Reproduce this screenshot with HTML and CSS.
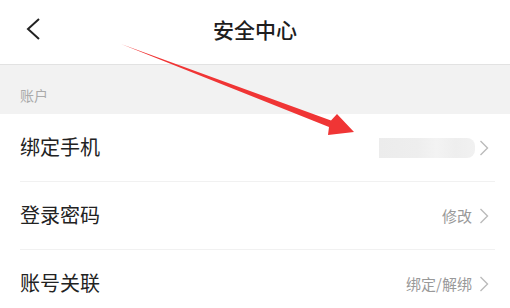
FILE: index.html
```html
<!DOCTYPE html>
<html lang="zh-CN">
<head>
    <meta charset="UTF-8">
    <meta name="viewport" content="width=device-width, initial-scale=1.0">
    <title>安全中心</title>
    <link rel="stylesheet" href="styles.css">
</head>
<body>
    <div id="header">
        <svg class="back" width="16" height="24" viewBox="0 0 16 24">
            <path d="M14 2 L3 12 L14 22" fill="none" stroke="#222" stroke-width="2"/>
        </svg>
        <span id="title">安全中心</span>
    </div>

    <div class="section-title">账户</div>

    <div class="list">
        <div class="row">
            <span class="label">绑定手机</span>
            <span class="value">
                <span class="masked"></span>
                <svg class="chevron" width="10" height="16" viewBox="0 0 10 16"><path d="M1.5 1 L8.5 8 L1.5 15" fill="none" stroke="#bbb" stroke-width="1.4"/></svg>
            </span>
        </div>
        <div class="row">
            <span class="label">登录密码</span>
            <span class="value">修改
                <svg class="chevron" width="10" height="16" viewBox="0 0 10 16"><path d="M1.5 1 L8.5 8 L1.5 15" fill="none" stroke="#bbb" stroke-width="1.4"/></svg>
            </span>
        </div>
        <div class="row">
            <span class="label">账号关联</span>
            <span class="value">绑定/解绑
                <svg class="chevron" width="10" height="16" viewBox="0 0 10 16"><path d="M1.5 1 L8.5 8 L1.5 15" fill="none" stroke="#bbb" stroke-width="1.4"/></svg>
            </span>
        </div>
    </div>

    <!-- red annotation arrow over the page -->
    <svg class="arrow" width="510" height="308" viewBox="0 0 510 308">
        <polygon points="121,44 331,120.5 337,114 354,132 328,135 329,127" fill="#f03535"/>
    </svg>
</body>
</html>
```

FILE: styles.css
```css
html, body {
    margin: 0;
    padding: 0;
}

body {
    font-family: "Noto Sans CJK SC", "Noto Sans", sans-serif;
    background-color: #fff;
    width: 510px;
    height: 308px;
    overflow: hidden;
    position: relative;
}

#header {
    height: 64px;
    border-bottom: 1px solid #e2e2e2;
    display: flex;
    align-items: center;
    justify-content: center;
    position: relative;
    background-color: #fff;
}

.back {
    position: absolute;
    left: 25px;
    top: 17px;
}

#title {
    font-size: 21px;
    font-weight: 500;
    color: #1e1e1e;
    margin-top: -6px;
}

.section-title {
    background-color: #f2f2f2;
    height: 49px;
    box-sizing: border-box;
    padding: 20px 0 0 20px;
    font-size: 14px;
    line-height: 20px;
    color: #aaa;
}

.list {
    padding-left: 20px;
}

.row {
    height: 67px;
    display: flex;
    align-items: center;
    justify-content: space-between;
    border-bottom: 1px solid #f1f1f1;
    margin-right: 15px;
    padding-right: 6px;
}

.row:last-child {
    border-bottom: none;
}

.label {
    font-size: 20px;
    color: #222;
    margin-top: -2px;
}

.value {
    display: flex;
    align-items: center;
    font-size: 15px;
    color: #999;
}

.chevron {
    margin-left: 7px;
}

.masked {
    width: 96px;
    height: 20px;
    border-radius: 0 8px 8px 0;
    background: linear-gradient(to right, #ececec 0%, #eeeeee 40%, #f3f3f3 60%, #eeeeee 80%, #f1f1f1 100%);
    margin-right: -3px;
}

.arrow {
    position: absolute;
    left: 0;
    top: 0;
}
```
